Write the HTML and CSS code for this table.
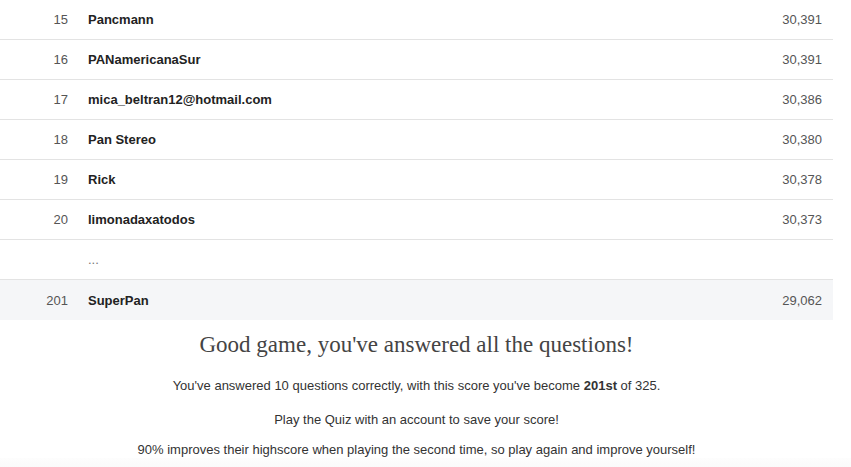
FILE: index.html
```html
<!DOCTYPE html>
<html>
<head>
<meta charset="utf-8">
<link rel="stylesheet" href="styles.css">
</head>
<body>
<div class="page">
  <div class="board">
    <div class="row"><span class="rank">15</span><span class="name">Pancmann</span><span class="score">30,391</span></div>
    <div class="row"><span class="rank">16</span><span class="name">PANamericanaSur</span><span class="score">30,391</span></div>
    <div class="row"><span class="rank">17</span><span class="name">mica_beltran12@hotmail.com</span><span class="score">30,386</span></div>
    <div class="row"><span class="rank">18</span><span class="name">Pan Stereo</span><span class="score">30,380</span></div>
    <div class="row"><span class="rank">19</span><span class="name">Rick</span><span class="score">30,378</span></div>
    <div class="row"><span class="rank">20</span><span class="name">limonadaxatodos</span><span class="score">30,373</span></div>
    <div class="row"><span class="rank"></span><span class="ellipsis">...</span><span class="score"></span></div>
    <div class="row me"><span class="rank">201</span><span class="name">SuperPan</span><span class="score">29,062</span></div>
  </div>
  <div class="result">
    <h2 class="title">Good game, you've answered all the questions!</h2>
    <p class="line first">You've answered 10 questions correctly, with this score you've become <b>201st</b> of 325.</p>
    <p class="line second">Play the Quiz with an account to save your score!</p>
    <p class="line third">90% improves their highscore when playing the second time, so play again and improve yourself!</p>
  </div>
</div>
<div class="footer"></div>
</body>
</html>
```

FILE: styles.css
```css
html, body {
  margin: 0;
  padding: 0;
  background: #fff;
}
body {
  font-family: "Liberation Sans", Arial, sans-serif;
  font-size: 13px;
  color: #333;
}
.page {
  width: 833px;
}
.board {
  display: flex;
  flex-direction: column;
}
.row {
  display: flex;
  align-items: center;
  height: 39px;
  border-bottom: 1px solid #e3e3e3;
}
.row.me {
  background: #f5f6f8;
  border-bottom: none;
  height: 40px;
}
.rank {
  width: 68px;
  text-align: right;
  color: #555;
  flex: none;
}
.name {
  margin-left: 20px;
  font-weight: bold;
  color: #222;
  flex: 1;
}
.ellipsis {
  margin-left: 20px;
  color: #777;
  flex: 1;
}
.score {
  width: 120px;
  text-align: right;
  padding-right: 11px;
  color: #555;
}
.result {
  text-align: center;
  padding-top: 10px;
}
.title {
  font-family: "Liberation Serif", Georgia, serif;
  font-weight: normal;
  font-size: 23px;
  color: #444;
  margin: 0 0 18px;
  line-height: 30px;
}
.line {
  margin: 0;
  line-height: 16px;
  color: #333;
}
.line.second {
  margin-top: 18px;
}
.line.third {
  margin-top: 14px;
}
.footer {
  height: 20px;
  background: linear-gradient(#fdfdfd, #f7f7f7);
}
```
